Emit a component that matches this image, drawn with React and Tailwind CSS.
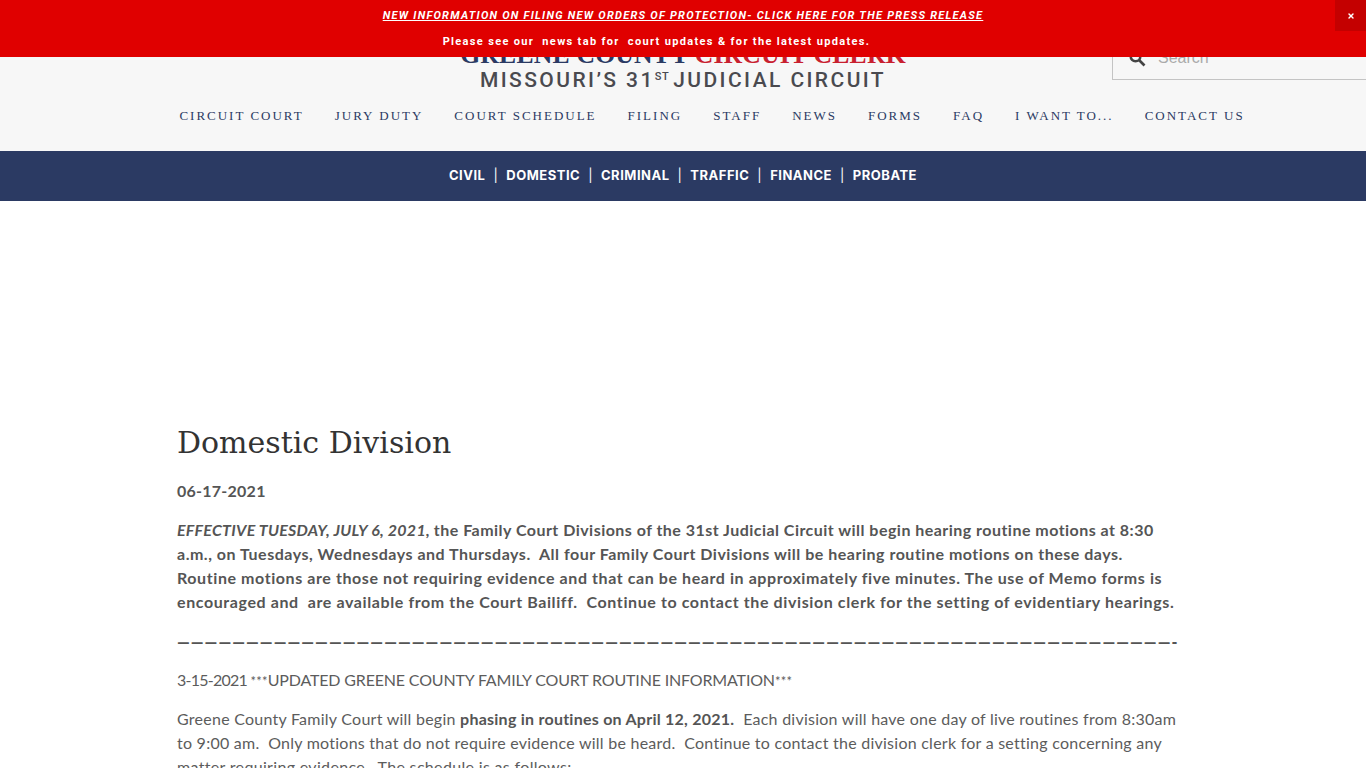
import React from "react";
import { X } from "lucide-react";

const nav = ["CIRCUIT COURT","JURY DUTY","COURT SCHEDULE","FILING","STAFF","NEWS","FORMS","FAQ","I WANT TO...","CONTACT US"];
const sub = ["CIVIL","DOMESTIC","CRIMINAL","TRAFFIC","FINANCE","PROBATE"];

export default function App() {
  return (
    <div className="relative h-screen overflow-hidden bg-white font-['Lato','Open_Sans',sans-serif]">
      <div className="absolute inset-x-0 top-0 z-10 h-[57px] bg-[#e00000] text-center font-['Roboto',sans-serif] text-white">
        <div className="pt-[8px] text-[11px] leading-[15px] font-bold italic tracking-[1.25px] underline">NEW INFORMATION ON FILING NEW ORDERS OF PROTECTION- CLICK HERE FOR THE PRESS RELEASE</div>
        <div className="pt-[11px] pr-[53px] text-[11px] leading-[15px] font-bold tracking-[1.34px] whitespace-pre">Please see our  news tab for  court updates &amp; for the latest updates.</div>
        <button className="absolute right-0 top-0 flex h-[31px] w-[31px] items-center justify-center bg-[#c40000]"><X size={8} strokeWidth={4} /></button>
      </div>

      <header className="relative h-[151px] bg-[#f7f7f7]">
        <div className="flex flex-col items-center pt-[40px]">
          <div className="font-['Liberation_Serif',serif] text-[25.7px] leading-[30px] font-bold tracking-[0.2px] whitespace-nowrap">
            <span className="text-[#2b3a63]">GREENE COUNTY </span><span className="text-[#c8202f]">CIRCUIT CLERK</span>
          </div>
          <div className="flex items-start font-['Roboto',sans-serif] text-[21px] leading-[20px] font-medium tracking-[2.42px] text-[#4a4a4f] whitespace-nowrap">
            MISSOURI’S 31<span className="text-[11px] leading-[14px] tracking-[0.5px]">ST</span><span className="ml-[4px]">JUDICIAL CIRCUIT</span>
          </div>
        </div>
        <div className="absolute right-0 top-[30px] flex h-[50px] w-[254px] items-end border border-r-0 border-[#c4c4c4] pb-[12px] pl-[16px]">
          <svg width="17" height="17" viewBox="0 0 17 17" fill="none" stroke="#444" strokeWidth="2.6"><circle cx="6.5" cy="6.5" r="4.8"/><path d="M10 10l5.5 5.5"/></svg>
          <span className="ml-[12px] font-['Liberation_Sans',sans-serif] text-[16px] leading-[18px] text-[#aaa]">Search</span>
        </div>
        <nav className="absolute inset-x-0 top-[107px] flex justify-center gap-[31px] pl-[58px] font-['Liberation_Serif',serif] text-[13px] leading-[17px] tracking-[2px] text-[#2b3a63]">
          {nav.map((n) => <a key={n} className="whitespace-nowrap">{n}</a>)}
        </nav>
      </header>

      <div className="flex h-[50px] items-center justify-center bg-[#2b3a63] font-['Inter',sans-serif] text-[13px] font-bold tracking-[0.5px] text-white">
        {sub.map((s, i) => (
          <React.Fragment key={s}>
            {i > 0 && <span className="mx-[8px] font-normal">|</span>}
            <span>{s}</span>
          </React.Fragment>
        ))}
      </div>

      <main className="mx-auto w-[1000px] pt-[222px] text-[16px] leading-[24px] text-[#5c5c5c] translate-x-[-6px]">
        <h1 className="font-['DejaVu_Serif',serif] text-[30px] leading-[40px] text-[#333]">Domestic Division</h1>
        <p className="mt-[16px] font-bold tracking-[0.25px] text-[#555]">06-17-2021</p>
        <p className="mt-[15px] font-bold whitespace-pre text-[#555]">
          <em className="tracking-[0.25px]">EFFECTIVE TUESDAY, JULY 6, 2021,</em> <span className="tracking-[0.47px]">the Family Court Divisions of the 31st Judicial Circuit will begin hearing routine motions at 8:30</span><br/>
          <span className="tracking-[0.51px]">a.m., on Tuesdays, Wednesdays and Thursdays.  All four Family Court Divisions will be hearing routine motions on these days.</span><br/>
          <span className="tracking-[0.58px]">Routine motions are those not requiring evidence and that can be heard in approximately five minutes. The use of Memo forms is</span><br/>
          <span className="tracking-[0.6px]">encouraged and  are available from the Court Bailiff.  Continue to contact the division clerk for the setting of evidentiary hearings.</span>
        </p>
        <p className="mt-[16px] font-black whitespace-nowrap tracking-[1.02px] text-[#555]">————————————————————————————————————————————————————————————————————————-</p>
        <p className="mt-[14px] whitespace-pre">
          <span className="tracking-[-0.75px]">3-15-2021 </span><span className="text-[13px] tracking-[0.2px]">***</span><span className="tracking-[-0.16px]">UPDATED GREENE COUNTY FAMILY COURT ROUTINE INFORMATION</span><span className="text-[13px] tracking-[0.2px]">***</span>
        </p>
        <p className="mt-[14px] whitespace-pre tracking-[0.25px]">
          Greene County Family Court will begin <strong className="text-[#555]">phasing in routines on April 12, 2021.</strong>  Each division will have one day of live routines from 8:30am<br/>
          to 9:00 am.  Only motions that do not require evidence will be heard.  Continue to contact the division clerk for a setting concerning any<br/>
          <span className="tracking-[0.33px]">matter requiring evidence.  The schedule is as follows:</span>
        </p>
      </main>
    </div>
  );
}
